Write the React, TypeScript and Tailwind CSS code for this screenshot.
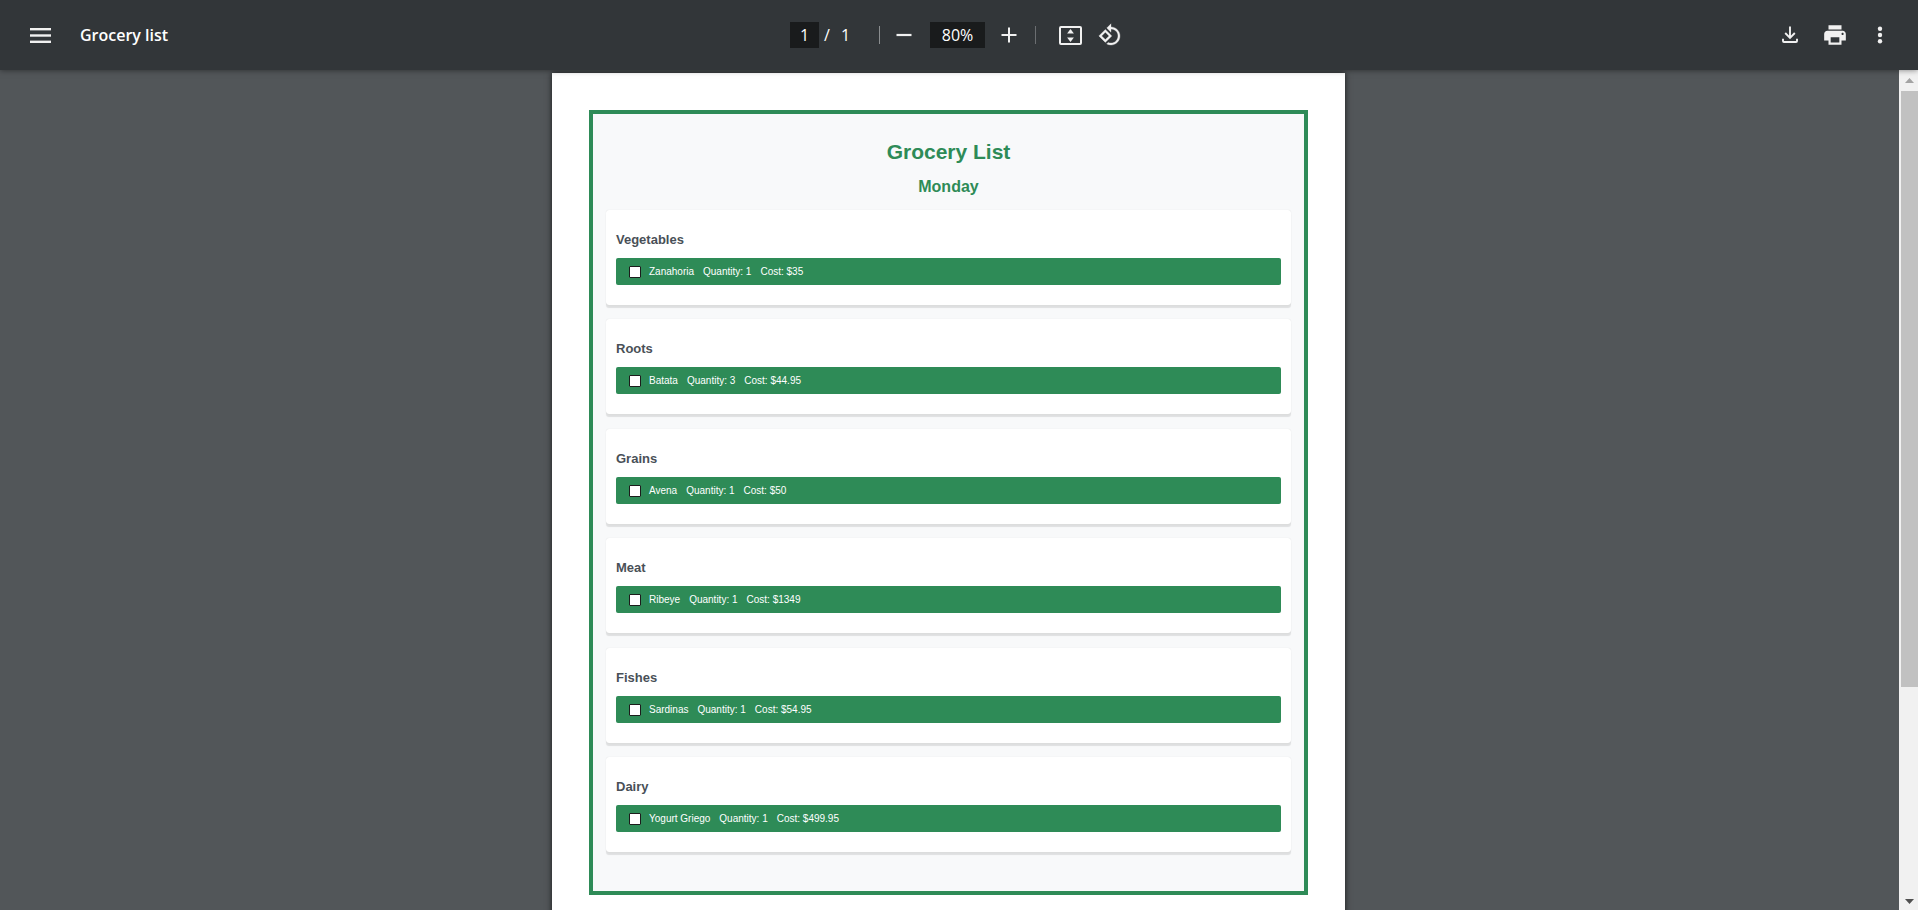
import { useState } from "react";

type Section = { name: string; item: string; quantity: number; cost: string };

const sections: Section[] = [
  { name: "Vegetables", item: "Zanahoria", quantity: 1, cost: "$35" },
  { name: "Roots", item: "Batata", quantity: 3, cost: "$44.95" },
  { name: "Grains", item: "Avena", quantity: 1, cost: "$50" },
  { name: "Meat", item: "Ribeye", quantity: 1, cost: "$1349" },
  { name: "Fishes", item: "Sardinas", quantity: 1, cost: "$54.95" },
  { name: "Dairy", item: "Yogurt Griego", quantity: 1, cost: "$499.95" },
];

function IconButton({ label, children, className = "" }: { label: string; children: React.ReactNode; className?: string }) {
  return (
    <button
      type="button"
      aria-label={label}
      className={`flex size-8 shrink-0 items-center justify-center rounded-full text-[#f1f1f1] hover:bg-white/10 ${className}`}
    >
      {children}
    </button>
  );
}

function Toolbar() {
  const [page, setPage] = useState("1");
  const [zoom, setZoom] = useState("80%");
  return (
    <header className="relative z-10 flex h-[70px] shrink-0 items-center bg-[#323639] font-['Open_Sans','Noto_Sans',sans-serif] text-white shadow-[0_0_6px_rgba(0,0,0,0.5)]">
      <div className="flex flex-1 items-center gap-6 pl-6">
        <IconButton label="Menu">
          <svg width="21" height="15" viewBox="0 0 21 15" fill="currentColor">
            <rect y="0" width="21" height="2.4" />
            <rect y="6.3" width="21" height="2.4" />
            <rect y="12.6" width="21" height="2.4" />
          </svg>
        </IconButton>
        <h1 className="text-base font-semibold">Grocery list</h1>
      </div>

      <div className="flex items-center pr-1 text-base">
        <input
          aria-label="Page number"
          value={page}
          onChange={(e) => setPage(e.target.value)}
          className="h-[26px] w-[29px] bg-[#191b1c] text-center outline-none"
        />
        <span className="ml-1 w-2 text-center">/</span>
        <span className="ml-2.5 w-2 text-center">1</span>
        <span className="ml-[30px] h-[18px] w-px bg-[#8a8d8f]" />
        <IconButton label="Zoom out" className="ml-2">
          <svg width="16" height="16" viewBox="0 0 16 16" fill="currentColor">
            <rect x="0.5" y="6.9" width="15" height="2.2" />
          </svg>
        </IconButton>
        <input
          aria-label="Zoom level"
          value={zoom}
          onChange={(e) => setZoom(e.target.value)}
          className="ml-2.5 h-[26px] w-[55px] bg-[#191b1c] text-center outline-none"
        />
        <IconButton label="Zoom in" className="ml-2">
          <svg width="16" height="16" viewBox="0 0 16 16" fill="currentColor">
            <path d="M7 .5h2V7h6.500v2H9v6.500H7V9H.5V7H7z" />
          </svg>
        </IconButton>
        <span className="ml-2.5 h-[18px] w-px bg-[#6b6e71]" />
        <IconButton label="Fit to page" className="ml-[18px]">
          <svg width="23" height="19" viewBox="0 0 23 19" fill="none">
            <rect x="1" y="1" width="21" height="17" rx="1" stroke="currentColor" strokeWidth="2" />
            <path d="M11.500 3l3.400 4.600h-6.800zM11.500 16l3.400-4.600h-6.800z" fill="currentColor" />
          </svg>
        </IconButton>
        <IconButton label="Rotate counterclockwise" className="ml-2">
          <svg width="24" height="24" viewBox="0 0 24 24" fill="currentColor" stroke="currentColor" strokeWidth="0.3">
            <path d="M7.340 6.410L.86 12.900l6.490 6.480 6.490-6.480-6.500-6.490zM3.690 12.900l3.660-3.660L11 12.900l-3.660 3.660-3.650-3.660zm15.670-6.260C17.610 4.880 15.300 4 13 4V.76L8.760 5 13 9.240V6c1.790 0 3.580.68 4.950 2.050 2.730 2.730 2.730 7.170 0 9.900C16.580 19.320 14.790 20 13 20c-.97 0-1.940-.21-2.840-.61l-1.490 1.490C10.020 21.620 11.510 22 13 22c2.300 0 4.610-.88 6.360-2.640 3.520-3.510 3.520-9.210 0-12.720z" />
          </svg>
        </IconButton>
      </div>

      <div className="flex flex-1 items-center justify-end gap-[13px] pr-[22px]">
        <IconButton label="Download">
          <svg width="16" height="18" viewBox="0 0 16 18" fill="none" stroke="currentColor" strokeWidth="1.900">
            <path d="M8 .5v11M3.200 7l4.800 4.800L12.800 7M1 12.800v2.200q0 1 1 1h12q1 0 1-1v-2.200" />
          </svg>
        </IconButton>
        <IconButton label="Print">
          <svg width="26" height="26" viewBox="0 0 24 24" fill="currentColor">
            <path d="M19 8H5c-1.660 0-3 1.340-3 3v6h4v4h12v-4h4v-6c0-1.660-1.340-3-3-3zm-3 11H8v-5h8v5zm3-7c-.55 0-1-.45-1-1s.45-1 1-1 1 .45 1 1-.45 1-1 1zm-1-9H6v4h12V3z" />
          </svg>
        </IconButton>
        <IconButton label="More actions">
          <svg width="6" height="18" viewBox="0 0 6 18" fill="currentColor">
            <circle cx="3" cy="2.800" r="2.200" />
            <circle cx="3" cy="9" r="2.200" />
            <circle cx="3" cy="15.200" r="2.200" />
          </svg>
        </IconButton>
      </div>
    </header>
  );
}

function SectionCard({ section }: { section: Section }) {
  const id = `item-${section.name.toLowerCase()}`;
  return (
    <section className="rounded-[3px] bg-white px-2.5 pt-[22px] pb-5 shadow-[0_3px_1px_rgba(0,0,0,0.1),0_0_1px_rgba(0,0,0,0.15)]">
      <h3 className="text-[13px] leading-4 font-bold text-[#495057]">{section.name}</h3>
      <div className="mt-2.5 flex h-[27px] items-center rounded-[2px] bg-[#2e8b57] px-[13px] pt-px text-[10px] leading-3 text-white">
        <input
          id={id}
          type="checkbox"
          className="size-3 appearance-none rounded-[1px] border border-[#1c1c1c] bg-white checked:bg-[#495057]"
        />
        <label htmlFor={id} className="ml-2 flex gap-[9px]">
          <span>{section.item}</span>
          <span>Quantity: {section.quantity}</span>
          <span>Cost: {section.cost}</span>
        </label>
      </div>
    </section>
  );
}

function ScrollTrack() {
  return (
    <div aria-hidden="true" className="flex w-[19px] shrink-0 flex-col bg-[#f1f1f1] pl-0.5">
      <div className="flex h-[21px] shrink-0 items-center justify-center">
        <svg width="9" height="5" viewBox="0 0 9 5" fill="#a3a3a3">
          <path d="M4.500 0L9 5H0z" />
        </svg>
      </div>
      <div className="grow-[596] bg-[#c1c1c1]" />
      <div className="grow-[206]" />
      <div className="flex h-[17px] shrink-0 items-center justify-center">
        <svg width="9" height="5" viewBox="0 0 9 5" fill="#505050">
          <path d="M4.500 5L9 0H0z" />
        </svg>
      </div>
    </div>
  );
}

export default function App() {
  return (
    <div className="flex h-screen flex-col overflow-hidden bg-[#525659]">
      <Toolbar />
      <div className="flex min-h-0 flex-1">
        <main className="flex min-w-0 flex-1 items-start justify-center overflow-hidden pt-[3px] pr-0.5">
          <article className="w-full max-w-[793px] bg-white px-[37px] pt-[37px] pb-[300px] font-['Liberation_Sans',Arial,sans-serif] shadow-[0_0_6px_rgba(0,0,0,0.7)]">
            <div className="border-4 border-[#2e8b57] bg-[#f8f9fa] px-[13px] pt-[26px] pb-[39px]">
              <h1 className="text-center text-[21px] leading-6 font-bold text-[#2e8b57]">Grocery List</h1>
              <h2 className="mt-3.5 text-center text-base leading-[18px] font-bold text-[#2e8b57]">Monday</h2>
              <div className="mt-3.5 flex min-h-[642px] flex-col justify-between">
                {sections.map((section) => (
                  <SectionCard key={section.name} section={section} />
                ))}
              </div>
            </div>
          </article>
        </main>
        <ScrollTrack />
      </div>
    </div>
  );
}
